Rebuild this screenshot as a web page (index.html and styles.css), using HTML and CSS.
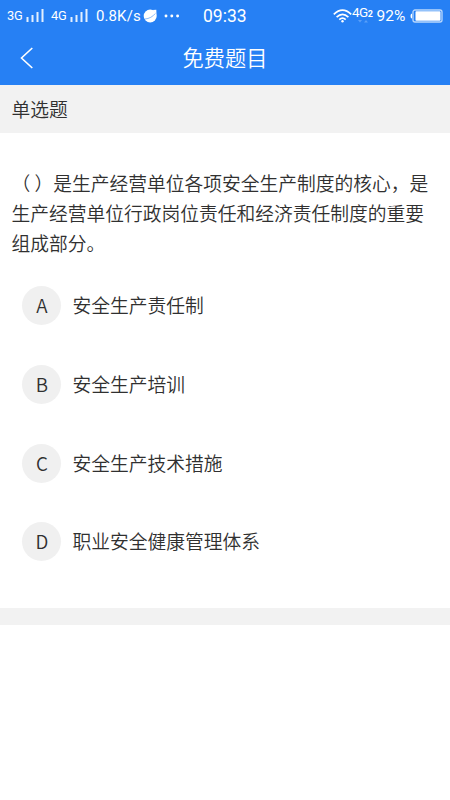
FILE: index.html
```html
<!DOCTYPE html>
<html lang="zh-CN">
<head>
<meta charset="utf-8">
<title>免费题目</title>
<link rel="stylesheet" href="styles.css">
</head>
<body>
<header class="top">
  <div class="status">
    <span class="net net-a">3G</span>
    <svg class="bars" width="18" height="13" viewBox="0 0 18 13"><path d="M1.500 8V13M6.500 6V13M11.500 3V13M16.500 0V13"/></svg>
    <span class="net net-b">4G</span>
    <svg class="bars" width="18" height="13" viewBox="0 0 18 13"><path d="M1.500 8V13M6.500 6V13M11.500 3V13M16.500 0V13"/></svg>
    <span class="speed">0.8K/s</span>
    <svg class="planet" width="15" height="14" viewBox="0 0 15 14"><circle cx="7.200" cy="7" r="6.500" fill="#fff"/><path d="M9.500 1L13.300 .8L13.500 5Z" fill="#fff"/><path d="M2 10C6 9.800 10 7.500 12.300 4.500" fill="none" stroke="#5a9ff8" stroke-width=".7"/></svg>
    <svg class="dots" width="16" height="4" viewBox="0 0 16 4" fill="#fff"><circle cx="2" cy="2" r="1.450"/><circle cx="7.800" cy="2" r="1.450"/><circle cx="13.600" cy="2" r="1.450"/></svg>
    <span class="clock">09:33</span>
    <svg class="wifi" width="19" height="14" viewBox="0 0 19 14" fill="none" stroke="#fff" stroke-width="1.700"><path d="M.8 5.300Q9.500-2.900 18.200 5.300M3.600 8.100Q9.500 2.500 15.400 8.100M6.300 10.700Q9.500 7.700 12.700 10.700"/><circle cx="9.500" cy="12.200" r="1.200" fill="#fff" stroke="none"/></svg>
    <span class="sim">4G<b>2</b><svg class="arrows" width="11" height="3" viewBox="0 0 11 3"><path d="M0 0H4L2 2.500ZM6 2.500H10L8 0Z" fill="#5a9ff8"/></svg></span>
    <span class="percent">92%</span>
    <svg class="battery" width="33" height="14" viewBox="0 0 33 14"><rect x="3" y="1" width="29" height="12" rx="2" fill="none" stroke="#b9d7fc" stroke-width="1.300"/><path d="M2 4.500Q.5 4.500.5 7T2 9.500Z" fill="#fff"/><rect x="5.500" y="2.300" width="25" height="9.400" rx=".8" fill="#fff"/></svg>
  </div>
  <nav class="nav">
    <svg class="back" width="14" height="22" viewBox="0 0 14 22"><path d="M12.300 1L1.500 11L12.300 21" fill="none" stroke="#fff" stroke-width="1.600"/></svg>
    <h1>免费题目</h1>
  </nav>
</header>
<div class="kind">单选题</div>
<main>
  <p class="question">（ ）是生产经营单位各项安全生产制度的核心，是生产经营单位行政岗位责任和经济责任制度的重要组成部分。</p>
  <ul class="options">
    <li><span class="letter">A</span><span class="answer">安全生产责任制</span></li>
    <li><span class="letter">B</span><span class="answer">安全生产培训</span></li>
    <li><span class="letter">C</span><span class="answer">安全生产技术措施</span></li>
    <li><span class="letter">D</span><span class="answer">职业安全健康管理体系</span></li>
  </ul>
</main>
<div class="divider"></div>
</body>
</html>
```
FILE: styles.css
```css
* { box-sizing: border-box; }
body {
  margin: 0;
  min-height: 800px;
  background: #fff;
  color: #303030;
  font-family: "Noto Sans CJK SC", sans-serif;
  font-size: 18.750px;
  font-weight: 350;
}
.top { height: 85px; background: #2680f4; color: #fff; }
.status {
  display: flex;
  align-items: center;
  height: 31px;
  padding-left: 7px;
  font-family: Roboto, sans-serif;
  font-weight: 400;
  line-height: 31px;
  white-space: nowrap;
}
.status > * { flex: none; }
.net { font-size: 12.800px; letter-spacing: -.3px; }
.net-a { width: 19px; }
.net-b { width: 19px; margin-left: 7px; }
.bars { fill: none; stroke: #e3effe; stroke-width: 2; }
.speed { width: 48px; height: 31px; margin-left: 8px; padding-top: 1px; font-size: 15px; letter-spacing: .1px; }
.planet { margin-left: -1px; }
.dots { margin-left: 6px; }
.clock { width: 46px; height: 31px; margin-left: 23px; padding-top: 1px; font-size: 17.500px; }
.wifi { margin-left: 84px; }
.sim { position: relative; width: 23px; font-size: 13.500px; letter-spacing: -.5px; margin-top: -4px; }
.sim b { font-size: 9px; }
.arrows { position: absolute; left: 6px; top: 23px; }
.percent { width: 34.500px; height: 31px; margin-left: 1.500px; padding-top: 1px; font-size: 15.500px; }
.battery { margin-left: -1px; }
.nav {
  display: grid;
  grid-template-columns: 60px 1fr 60px;
  align-items: center;
  height: 54px;
}
.back { margin-left: 20px; }
h1 { margin: 0; font-size: 21.200px; font-weight: 350; line-height: 52px; height: 54px; text-align: center; }
.kind { height: 48px; padding-left: 11.500px; background: #f2f2f2; line-height: 47px; }
main { height: 474.500px; padding-top: 34.500px; }
.question { margin: 0; padding: 0 10px 0 11.500px; line-height: 30px; }
.options { margin: 28.500px 0 0; padding: 0 0 0 22.400px; list-style: none; }
.options li { display: flex; gap: 11.200px; height: 39px; margin-bottom: 39.800px; line-height: 37px; }
.letter {
  width: 39px;
  height: 39px;
  border-radius: 50%;
  background: #f0f0f0;
  text-align: center;
}
.divider { height: 17.500px; background: #f2f2f2; }
```
